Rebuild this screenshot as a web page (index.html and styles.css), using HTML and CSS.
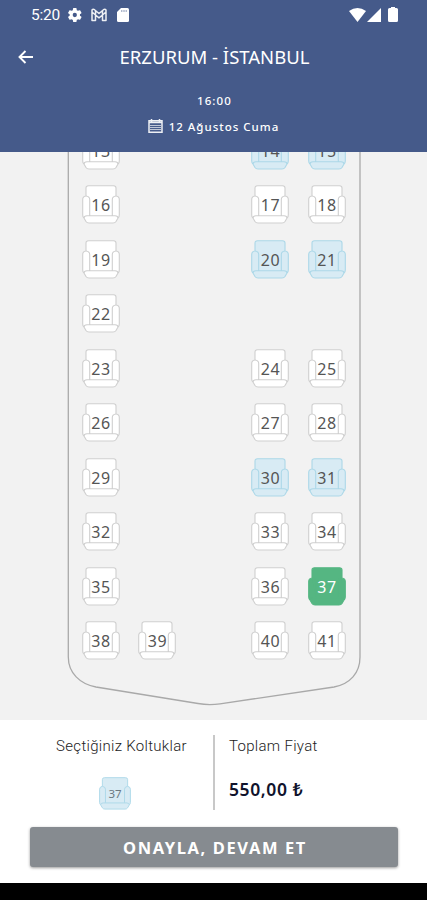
FILE: index.html
```html
<!DOCTYPE html>
<html lang="tr">
<head>
    <meta charset="UTF-8">
    <meta name="viewport" content="width=device-width, initial-scale=1.0">
    <title>Koltuk Seçimi</title>
    <link rel="stylesheet" href="styles.css">
</head>
<body>
    <svg class="symbols" width="0" height="0">
        <symbol id="seat" viewBox="0 0 38 39">
            <path class="whole" d="M6.500 .7H31.500Q34 .7 34 3V11Q37.300 11.500 37.300 14.500V30Q37.300 32 36 33L34 36.500Q33 38 31 38H7Q5 38 4 36.500L2 33Q.7 32 .7 30V14.500Q.7 11.500 4 11V3Q4 .7 6.500 .7Z"/>
            <path class="line" d="M4 11Q7.700 11.500 7.700 14.500V30.500M34 11Q30.300 11.500 30.300 14.500V30.500M2 33Q2 30.700 5 30.700H33Q36 30.700 36 33"/>
        </symbol>
    </svg>

    <div class="status-bar">
        <div class="status-left">
            <span class="clock">5:20</span>
            <svg class="gear" width="16" height="16" viewBox="0 0 24 24"><path fill="#fff" fill-rule="evenodd" d="M19.400 13a7.600 7.600 0 0 0 0-2l2.200-1.700a.5.500 0 0 0 .1-.6l-2.100-3.700a.5.500 0 0 0-.6-.2l-2.600 1a7.700 7.700 0 0 0-1.700-1l-.4-2.700A.5.500 0 0 0 13.800 1.600h-4.200a.5.500 0 0 0-.5.500l-.4 2.700c-.6.200-1.200.6-1.700 1l-2.600-1a.5.500 0 0 0-.6.200L1.700 8.700a.5.500 0 0 0 .1.600L4 11a7.600 7.600 0 0 0 0 2l-2.200 1.700a.5.500 0 0 0-.1.600l2.100 3.700c.1.200.4.300.6.200l2.600-1c.5.400 1.100.8 1.700 1l.4 2.700c0 .3.200.5.500.5h4.200c.3 0 .5-.2.500-.5l.4-2.700c.6-.2 1.200-.6 1.700-1l2.600 1c.2.100.5 0 .6-.2l2.100-3.700a.5.500 0 0 0-.1-.6ZM11.700 15.200a3.200 3.200 0 1 1 0-6.400 3.200 3.200 0 0 1 0 6.400Z"/></svg>
            <svg class="mail" width="16" height="14" viewBox="0 0 16 14"><path fill="none" stroke="#fff" stroke-opacity=".9" stroke-width="1.500" stroke-linejoin="round" d="M1 12.500V2Q2 .8 3.500 1.700L8 5.500 12.500 1.700Q14 .8 15 2V12.500H11.500V7L8 9.800 4.500 7V12.500ZM1 4L4.500 7V3M15 4L11.500 7V3"/></svg>
            <svg class="card" width="12" height="14" viewBox="0 0 12 14"><path fill="#fff" d="M4 0H10.500Q12 0 12 1.500V12.500Q12 14 10.500 14H1.500Q0 14 0 12.500V4Z"/><path stroke="#455a8a" stroke-opacity=".6" stroke-width="1" d="M4.800 2v2M7 2v2M9.200 2v2"/></svg>
        </div>
        <div class="status-right">
            <svg width="17" height="14" viewBox="0 0 17 14"><path fill="#fff" d="M0 3Q8.500-3 17 3L8.500 14Z"/></svg>
            <svg width="14" height="14" viewBox="0 0 14 14"><path fill="#fff" d="M14 0V14H0Z"/></svg>
            <svg class="battery" width="10" height="15" viewBox="0 0 10 15"><path fill="#fff" d="M3 0H7V1H8.500Q10 1 10 2.500V13.500Q10 15 8.500 15H1.500Q0 15 0 13.500V2.500Q0 1 1.500 1H3Z"/></svg>
        </div>
    </div>

    <header>
        <div class="title-row">
            <svg class="back" width="16" height="14" viewBox="0 0 16 14"><path fill="none" stroke="#fff" stroke-width="1.900" d="M15 7H2M7.500 1L1.500 7l6 6"/></svg>
            <h1>ERZURUM - İSTANBUL</h1>
        </div>
        <div class="time">16:00</div>
        <div class="date">
            <svg width="15" height="14" viewBox="0 0 15 14"><path fill="none" stroke="#fff" stroke-opacity=".9" stroke-width="1.500" d="M1 1.800H14V13.200H1ZM1 3.500H14M3.500 0V3M11.500 0V3"/><path stroke="#fff" stroke-opacity=".65" stroke-width="1.200" d="M2 6.500h11M2 8.500h11M2 10.500h11"/></svg>
            <span>12 Ağustos Cuma</span>
        </div>
    </header>

    <main>
        <svg class="bus" width="427" height="568" viewBox="0 152 427 568"><path fill="none" stroke="#a9a9a9" stroke-width="1.300" d="M68.300 151V657C68.300 673 80 684 96 687L198 703.500Q209 705.500 220 703.800L334 687C350 684 360 673 360 657V151"/></svg>
        <div class="seats" id="seats"></div>
    </main>

    <footer>
        <div class="summary">
            <div class="chosen">
                <p>Seçtiğiniz Koltuklar</p>
                <div class="seat taken small"><svg><use href="#seat"/></svg><span>37</span></div>
            </div>
            <div class="total">
                <p>Toplam Fiyat</p>
                <strong>550,00 ₺</strong>
            </div>
        </div>
        <button type="button">ONAYLA, DEVAM ET</button>
    </footer>
    <div class="nav-bar"></div>

    <script>
        // 0 = empty place
        const rows = [
            [13, 0, 14, 15],
            [16, 0, 17, 18],
            [19, 0, 20, 21],
            [22, 0, 0, 0],
            [23, 0, 24, 25],
            [26, 0, 27, 28],
            [29, 0, 30, 31],
            [32, 0, 33, 34],
            [35, 0, 36, 37],
            [38, 39, 40, 41]
        ];
        const taken = [14, 15, 20, 21, 30, 31];
        const selected = [37];
        const seats = document.getElementById('seats');

        rows.forEach(row => {
            row.forEach((no, i) => {
                if (i === 2) {
                    seats.appendChild(document.createElement('div')); // aisle
                }
                const seat = document.createElement('div');
                if (no) {
                    seat.className = 'seat';
                    if (taken.includes(no)) seat.classList.add('taken');
                    if (selected.includes(no)) seat.classList.add('selected');
                    seat.innerHTML = `<svg><use href="#seat"/></svg><span>${no}</span>`;
                }
                seats.appendChild(seat);
            });
        });
    </script>
</body>
</html>
```
FILE: styles.css
```css
* {
    box-sizing: border-box;
}

body {
    margin: 0;
    width: 427px;
    height: 900px;
    display: flex;
    flex-direction: column;
    overflow: hidden;
    background-color: #fff;
    font-family: "Noto Sans", "Open Sans", sans-serif;
}

svg {
    display: block;
    flex: none;
}

.symbols {
    display: none;
}

/* status bar */
.status-bar {
    height: 30px;
    flex: none;
    display: flex;
    justify-content: space-between;
    padding: 0 29px 0 31px;
    background-color: #455a8a;
    color: #fff;
}

.status-left,
.status-right {
    display: flex;
    align-items: center;
}

.clock {
    width: 36px;
    font-family: Roboto, sans-serif;
    font-size: 15.5px;
    letter-spacing: -0.2px;
}

.mail {
    margin: 0 10px 0 8px;
}

.status-right {
    gap: 1px;
    padding-bottom: 1px;
}

.battery {
    margin-left: 6px;
}

/* header */
header {
    height: 122px;
    flex: none;
    background-color: #455a8a;
    color: #fff;
    text-align: center;
}

.title-row {
    height: 54px;
    display: flex;
    align-items: center;
    padding: 0 18px;
}

h1 {
    flex: 1;
    margin: -2px 14px 0 0;
    font-size: 18.5px;
    font-weight: 400;
}

.time {
    height: 33px;
    line-height: 33px;
    padding-left: 2px;
    font-size: 11.5px;
    font-weight: 500;
    letter-spacing: 1.1px;
}

.date {
    display: flex;
    align-items: center;
    justify-content: center;
    gap: 6px;
    height: 18px;
    font-size: 11.5px;
    font-weight: 500;
    letter-spacing: 1px;
}

/* seat map */
main {
    height: 568px;
    flex: none;
    display: grid;
    overflow: hidden;
    background-color: #f2f2f2;
}

.bus,
.seats {
    grid-area: 1 / 1;
}

.seats {
    display: grid;
    grid-template-columns: repeat(5, 38px);
    grid-auto-rows: 38.5px;
    column-gap: 18.5px;
    row-gap: 15.95px;
    margin: -22px 0 0 81.900px;
}

.seat {
    display: grid;
    width: 38px;
    height: 39px;
}

.seat svg,
.seat span {
    grid-area: 1 / 1;
    width: 100%;
    height: 100%;
}

.seat svg {
    fill: #fff;
    stroke: #cfcfcf;
    stroke-width: 1.1;
}

.seat .line {
    fill: none;
}

.seat span {
    padding-top: 1px;
    text-align: center;
    line-height: 40px;
    font-size: 16px;
    letter-spacing: 0.5px;
    color: #555;
}

.seat.taken svg {
    fill: #d8ebf4;
    stroke: #acd8e8;
}

.seat.selected svg {
    fill: #55b682;
    stroke: #55b682;
}

.seat.selected span {
    color: #fff;
}

/* bottom panel */
footer {
    height: 163px;
    flex: none;
    padding: 15px 29px 0 30px;
    background-color: #fff;
}

.summary {
    display: grid;
    grid-template-columns: 183px 1fr;
    height: 74px;
}

.summary p {
    margin: 0;
    line-height: 22px;
    font-family: Roboto, sans-serif;
    font-size: 15px;
    font-weight: 300;
    letter-spacing: 0.3px;
    color: #222;
}

.chosen {
    display: flex;
    flex-direction: column;
    align-items: center;
}

.chosen p {
    white-space: nowrap;
}

.seat.small {
    width: 32px;
    height: 33px;
    margin: 20px 13px 0 0;
}

.seat.small span {
    padding-top: 0;
    line-height: 33px;
    font-size: 11.5px;
    letter-spacing: 0;
    color: #6b7a82;
}

.total {
    padding-left: 14px;
    border-left: 2px solid #c8c8c8;
}

.total strong {
    display: block;
    margin-top: 20px;
    line-height: 24px;
    font-size: 17.5px;
    font-weight: 600;
    letter-spacing: 0.6px;
    color: #10132c;
}

button {
    display: block;
    width: 368px;
    height: 40px;
    margin-top: 18px;
    padding: 0 0 0 2px;
    border: none;
    border-radius: 3px;
    background-color: #868b90;
    box-shadow: 0 1px 3px rgba(0, 0, 0, 0.4);
    color: #fff;
    font-family: inherit;
    font-size: 16.5px;
    font-weight: 700;
    letter-spacing: 1.6px;
}

.nav-bar {
    flex: 1;
    background-color: #000;
}
```
